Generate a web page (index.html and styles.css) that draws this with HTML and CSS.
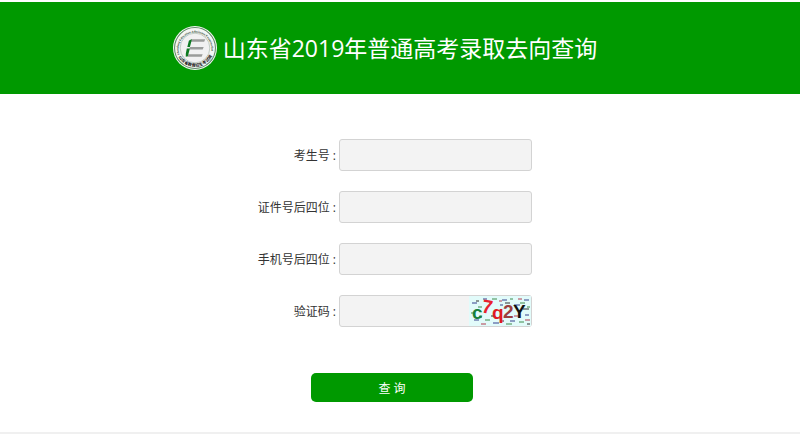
FILE: index.html
```html
<!DOCTYPE html>
<html lang="zh-CN">
<head>
    <meta charset="UTF-8">
    <meta name="viewport" content="width=device-width, initial-scale=1.0">
    <title>山东省2019年普通高考录取去向查询</title>
    <link rel="stylesheet" href="styles.css">
</head>
<body>
    <header class="header">
        <svg class="logo" viewBox="0 0 86 86" aria-hidden="true">
            <defs>
                <path id="ring-top" d="M 13 56 A 32 32 0 1 1 73 56"/>
                <path id="ring-bottom" d="M 9 57 A 37 37 0 0 0 77 57"/>
            </defs>
            <circle cx="43" cy="43" r="43" fill="#f4f6f4"/>
            <circle cx="43" cy="43" r="40" fill="none" stroke="#5f8a67" stroke-width="2"/>
            <circle cx="43" cy="43" r="29" fill="#f1f1f2" stroke="#8fa294" stroke-width="1"/>
            <text class="ring-en"><textPath href="#ring-top">Shandong Education Admission Examination</textPath></text>
            <text class="ring-cn"><textPath href="#ring-bottom" startOffset="4">山东省教育招生考试院</textPath></text>
            <path d="M36 26 H63 L61 31 H35 Z M33 41 H60 L58 46 H32 Z M30 55 H58 L56 60 H28 Z" fill="#9a9c9b"/>
            <path d="M34 27 L37 26 L33 41 H28 L31 29 Z M27 44 H33 L29 59 L25 60 V54 Z" fill="#0c7a22"/>
        </svg>
        <h1 class="title">山东省2019年普通高考录取去向查询</h1>
    </header>

    <form class="form">
        <div class="row">
            <label for="ksh">考生号&nbsp;:</label>
            <input type="text" id="ksh" class="field">
        </div>
        <div class="row">
            <label for="zjh">证件号后四位&nbsp;:</label>
            <input type="text" id="zjh" class="field">
        </div>
        <div class="row">
            <label for="sjh">手机号后四位&nbsp;:</label>
            <input type="text" id="sjh" class="field">
        </div>
        <div class="row">
            <label for="yzm">验证码&nbsp;:</label>
            <div class="code">
                <input type="text" id="yzm" class="field">
                <svg class="captcha" viewBox="0 0 62 30">
                    <rect width="62" height="30" fill="#e2fbfa"/>
                    <path d="M3 7h5M14 3h4M33 4h5M45 9h6M55 4h5M5 24h5M24 27h6M41 25h5M56 19h4M31 9h3" stroke="#35418c"/>
                    <path d="M9 11h4M23 3h5M41 3h3M51 7h5M2 17h4M16 24h5M37 28h6M50 26h5M58 11h3" stroke="#3f8a4a"/>
                    <path d="M20 7h3M30 5h3M49 3h4M56 24h5M12 28h5M27 22h4M45 20h4" stroke="#b23c4f"/>
                    <path d="M7 5h3M36 7h5M54 13h6M22 20h4M31 25h4M58 28h3M10 21h3" stroke="#333"/>
                    <g class="captcha-text">
                        <text x="3" y="23" fill="#16803a">c</text>
                        <text x="13" y="17" fill="#e8232e" transform="rotate(10 17 11)">7</text>
                        <text x="23" y="23" fill="#e01b22">q</text>
                        <text x="34" y="22" fill="#9c3f3f">2</text>
                        <text x="44" y="22" fill="#111">Y</text>
                    </g>
                </svg>
            </div>
        </div>
        <div class="actions">
            <button type="submit" class="submit">查 询</button>
        </div>
    </form>

    <footer class="footer"></footer>
</body>
</html>
```
FILE: styles.css
```css
* {
    box-sizing: border-box;
}

body {
    margin: 0;
    background: #fff;
    color: #333;
    font-family: "Open Sans", "Noto Sans CJK SC", sans-serif;
    font-size: 12px;
}

.header {
    display: flex;
    justify-content: center;
    align-items: center;
    gap: 6px;
    margin-top: 2px;
    padding: 24px 30px 24px 0;
    background: #009900;
}

.logo {
    width: 44px;
    height: 44px;
}

.ring-en {
    font: bold 6px "Liberation Serif", serif;
    fill: #2d4a34;
}

.ring-cn {
    font: bold 8px "Noto Sans CJK SC", sans-serif;
    fill: #111;
}

.title {
    margin: 0;
    color: #fff;
    font-size: 23px;
    font-weight: 400;
    line-height: 44px;
}

.form {
    padding-top: 45px;
}

.row {
    display: flex;
    align-items: center;
    gap: 3px;
    margin-bottom: 20px;
}

.row label {
    width: 42%;
    text-align: right;
}

.field {
    display: block;
    width: 193px;
    height: 32px;
    padding: 0 8px;
    border: 1px solid #d3d3d3;
    border-radius: 3px;
    background: #f3f3f3;
    font: inherit;
}

.code {
    position: relative;
}

.captcha {
    position: absolute;
    top: 1px;
    right: 1px;
    width: 62px;
    height: 30px;
}

.captcha-text {
    font: bold 19px "Liberation Sans", sans-serif;
}

.actions {
    display: flex;
    justify-content: center;
    padding: 26px 16px 30px 0;
}

.submit {
    width: 162px;
    height: 29px;
    border: 0;
    border-radius: 5px;
    background: #009900;
    color: #fff;
    font: inherit;
    cursor: pointer;
}

.footer {
    border-top: 2px solid #f0f0f0;
}
```
